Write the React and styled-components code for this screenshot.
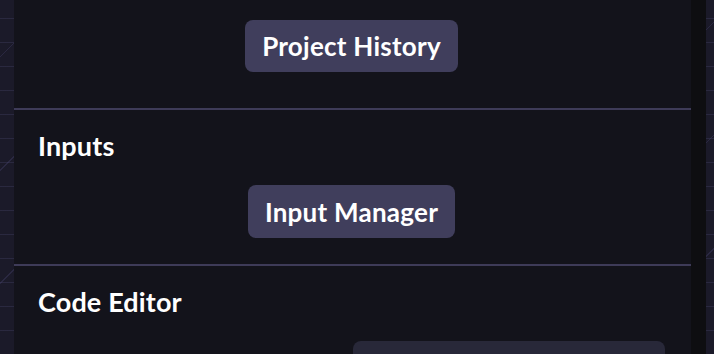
import React from "react";
import styled, { createGlobalStyle } from "styled-components";

const Global = createGlobalStyle`
  html, body { margin: 0; padding: 0; height: 100%; overflow: hidden; }
  body {
    background-color: #1b1a29;
    background-image:
      repeating-linear-gradient(135deg, transparent 0 40px, rgba(70,66,110,0.35) 40px 41px, transparent 41px 80px),
      repeating-linear-gradient(0deg, transparent 0 23px, rgba(60,58,90,0.45) 23px 24px);
    font-family: Lato, "Liberation Sans", sans-serif;
  }
  #root { height: 100%; }
`;

const Page = styled.div`
  display: flex;
  height: 354px;
  padding: 0 8px 0 14px;
  box-sizing: border-box;
`;

const Panel = styled.div`
  flex: 1;
  display: flex;
  flex-direction: column;
  background: #13131b;
  overflow: hidden;
`;

const Scrollbar = styled.div`
  width: 15px;
  background: #0e0e11;
`;

const Section = styled.section`
  display: flex;
  flex-direction: column;
  padding: ${(p) => p.$pad};
  border-bottom: ${(p) => (p.$divider ? "2px solid #3e3b58" : "none")};
  flex-shrink: 0;
`;

const Title = styled.h2`
  margin: 0 0 23px;
  font-size: 27px;
  line-height: 32px;
  font-weight: 700;
  letter-spacing: 0.15px;
  color: #ffffff;
`;

const Center = styled.div`
  display: flex;
  justify-content: center;
`;

const Button = styled.button`
  border: none;
  border-radius: 8px;
  background: ${(p) => p.$bg || "#403e5c"};
  color: #ffffff;
  font-family: Lato, "Liberation Sans", sans-serif;
  font-weight: 700;
  font-size: 26px;
  line-height: 32px;
  letter-spacing: 0.25px;
  padding: 10px 17px 10px;
  height: ${(p) => p.$h || "52px"};
  cursor: pointer;
`;

const Grid = styled.div`
  display: grid;
  grid-template-columns: 1fr 312px;
`;

const WideButton = styled(Button)`
  grid-column: 2;
`;

export default function App() {
  return (
    <>
      <Global />
      <Page>
        <Panel>
          <Section $divider $pad="20px 26px 36px 24px">
            <Center>
              <Button>Project History</Button>
            </Center>
          </Section>
          <Section $divider $pad="20px 26px 26px 24px">
            <Title>Inputs</Title>
            <Center>
              <Button $h="53px">Input Manager</Button>
            </Center>
          </Section>
          <Section $pad="20px 26px 26px 24px">
            <Title>Code Editor</Title>
            <Grid>
              <WideButton $bg="#282839" aria-label="Open editor" />
            </Grid>
          </Section>
        </Panel>
        <Scrollbar />
      </Page>
    </>
  );
}
